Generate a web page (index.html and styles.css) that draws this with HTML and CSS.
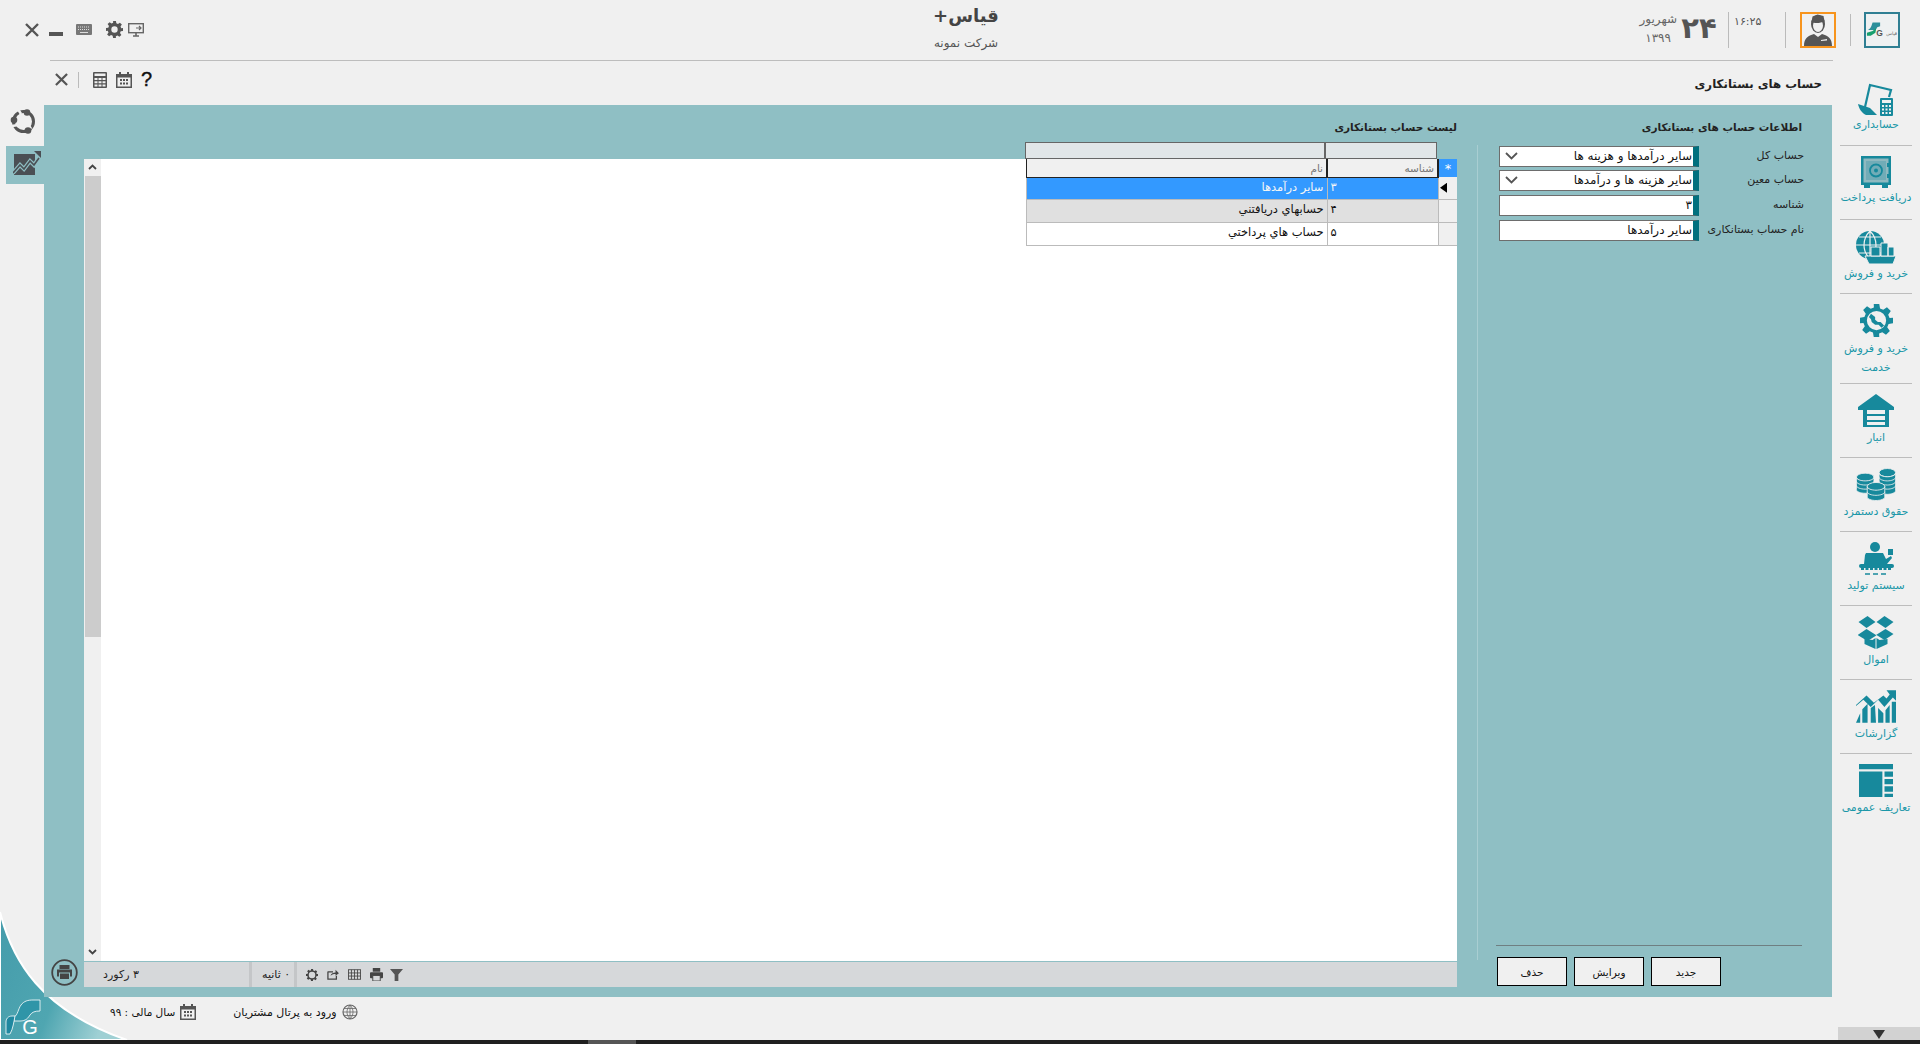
FILE: index.html
```html
<!DOCTYPE html>
<html lang="fa">
<head>
<meta charset="utf-8">
<title>حساب های بستانکاری</title>
<link rel="stylesheet" href="styles.css">
</head>
<body>
<div class="app">
  <svg class="swoosh" width="130" height="132" viewBox="0 908 130 132">
    <defs><linearGradient id="sw" x1="0" y1="0" x2="1" y2="0.4"><stop offset="0" stop-color="#459cab"/><stop offset="0.6" stop-color="#4fa6b1"/><stop offset="1" stop-color="#9fd0d4"/></linearGradient></defs>
    <path d="M0 912C12 960 40 1010 127 1040L0 1040Z" fill="url(#sw)" stroke="#fff" stroke-width="2"/>
  </svg>

  <header class="topbar">
    <div class="win-tools">
      <svg class="ico x-ico" width="14" height="14" viewBox="0 0 14 14"><path d="M1 1L13 13M13 1L1 13" stroke="#555" stroke-width="2.400" fill="none"/></svg>
      <span class="minimize"></span>
      <svg class="ico keyboard" width="16" height="11" viewBox="0 0 16 11"><rect width="16" height="11" rx="1" fill="#777"/><path d="M2 3h12M2 5.500h12" stroke="#ddd" stroke-width="1" stroke-dasharray="1 1"/><path d="M4 8.500h8" stroke="#ddd"/></svg>
      <svg class="ico gear-ico" width="17" height="17" viewBox="0 0 24 24"><path fill="#555" fill-rule="evenodd" d="M10 0h4l.6 3.200 2.300 1 2.700-1.900 2.800 2.800-1.900 2.700 1 2.300L24 10v4l-3.200.6-1 2.300 1.900 2.700-2.800 2.800-2.700-1.900-2.300 1L14 24h-4l-.6-3.200-2.300-1-2.700 1.900-2.800-2.800 1.900-2.700-1-2.300L0 14v-4l3.200-.6 1-2.300-1.900-2.700 2.800-2.800 2.700 1.900 2.300-1zM12 7.500a4.500 4.500 0 1 0 0 9 4.500 4.500 0 0 0 0-9z"/></svg>
      <svg class="ico" width="16" height="14" viewBox="0 0 16 14"><rect x="0.700" y="0.700" width="14.600" height="9" fill="none" stroke="#666" stroke-width="1.400"/><path d="M5 13h6M8 10v3" stroke="#666" stroke-width="1.600"/><path d="M8 5h5M11 3l2 2-2 2" stroke="#666" fill="none" stroke-width="1.200"/></svg>
    </div>
    <div class="brand" dir="rtl">
      <div class="brand-name">قیاس+</div>
      <div class="brand-sub">شرکت نمونه</div>
    </div>
    <div class="top-info">
      <div class="date-text" dir="rtl"><div class="month">شهریور</div><div class="year">۱۳۹۹</div></div>
      <div class="day">۲۴</div>
      <div class="time">۱۶:۲۵</div>
      <div class="avatar">
        <svg width="30" height="32" viewBox="0 0 30 32"><ellipse cx="15" cy="10" rx="7" ry="9" fill="#555"/><ellipse cx="15" cy="11.500" rx="5" ry="6.500" fill="#f0f0f0"/><path d="M8.500 8c3 1.500 9 1.500 13-1l-1-5-6-1.500-5 2z" fill="#555"/><path d="M1 32c0-8 4-10 10-12l4 3 4-3c6 2 10 4 10 12z" fill="#555"/><path d="M18 26l6-1v1.500l-6 .5z" fill="#f0f0f0"/></svg>
      </div>
      <span class="v-sep"></span>
      <div class="co-logo">
        <svg width="32" height="32" viewBox="0 0 34 34"><path d="M7 9h8v4l-3 1-2 3H2c3-1 4-5 5-8z" fill="#2b8f9b"/><path d="M1 20l6-2 4-3-1 5-5 3H1z" fill="#17a06e"/><text x="11" y="23" class="co-g">G</text><text x="33" y="22" class="co-t">قیاس</text></svg>
      </div>
    </div>
  </header>

  <div class="workspace">
    <aside class="left-rail">
      <div class="rail-item rail-sync">
        <svg width="27" height="25" viewBox="0 0 27 25"><circle cx="13.500" cy="12.500" r="10" fill="none" stroke="#555" stroke-width="3"/><path d="M8 0l3 5M2 17l6-1M21 20l-3-5" stroke="#f0f0f0" stroke-width="2.500"/><circle cx="17" cy="3.500" r="3.300" fill="#555"/><circle cx="4" cy="11" r="3.300" fill="#555"/><circle cx="18" cy="21.500" r="3.300" fill="#555"/></svg>
      </div>
      <div class="rail-item active">
        <svg width="28" height="24" viewBox="0 0 28 24"><rect x="1" y="3" width="21" height="21" fill="#4a4f54"/><path d="M0 22l7-8 4 4 6-8 4 4 6-9" fill="none" stroke="#8fbfc4" stroke-width="4"/><path d="M0 22l7-8 4 4 6-8 4 4 5-7" fill="none" stroke="#4a4f54" stroke-width="1.600"/><path d="M21 0h7v7z" fill="#4a4f54"/></svg>
      </div>
    </aside>

    <main class="content">
      <div class="subhead">
        <div class="form-tools">
          <svg width="13" height="13" viewBox="0 0 14 14"><path d="M1 1L13 13M13 1L1 13" stroke="#555" stroke-width="2.400" fill="none"/></svg>
          <span class="tool-sep"></span>
          <svg width="14" height="16" viewBox="0 0 14 16"><rect width="14" height="16" rx="1" fill="#555"/><rect x="1.500" y="1.500" width="11" height="2.500" fill="#f0f0f0"/><path d="M1.500 6h3v2h-3zM5.500 6h3v2h-3zM9.500 6h3v2h-3zM1.500 9.200h3v2h-3zM5.500 9.200h3v2h-3zM9.500 9.200h3v2h-3zM1.500 12.400h3v2h-3zM5.500 12.400h3v2h-3zM9.500 12.400h3v2h-3z" fill="#f0f0f0"/></svg>
          <svg width="16" height="16" viewBox="0 0 16 16"><rect y="2" width="16" height="14" fill="#555"/><rect x="1.500" y="5.500" width="13" height="9" fill="#f0f0f0"/><path d="M3 0h2v3.500H3zM11 0h2v3.500h-2z" fill="#555"/><path d="M4 7h2v2H4zM7 7h2v2H7zM10 7h2v2h-2zM4 10.500h2v2H4zM7 10.500h2v2H7zM10 10.500h2v2h-2z" fill="#555"/></svg>
          <span class="help">?</span>
        </div>
        <h1 class="page-title" dir="rtl">حساب های بستانکاری</h1>
      </div>

      <div class="panel">
        <section class="list-col">
          <h2 class="section-title" dir="rtl">لیست حساب بستانکاری</h2>
          <div class="bands">
            <span class="band band-name"></span><span class="band band-id"></span>
          </div>
          <div class="grid-body">
            <div class="scrollbar">
              <svg width="9" height="6" viewBox="0 0 9 6"><path d="M1 5l3.500-3.500L8 5" fill="none" stroke="#444" stroke-width="1.800"/></svg>
              <span class="thumb"></span>
              <svg class="scroll-down" width="9" height="6" viewBox="0 0 9 6"><path d="M1 1l3.500 3.500L8 1" fill="none" stroke="#444" stroke-width="1.800"/></svg>
            </div>
            <div class="canvas"></div>
            <table class="data" dir="rtl">
              <colgroup><col class="c-mark"><col class="c-id"><col class="c-name"></colgroup>
              <thead><tr><th class="star">*</th><th>شناسه</th><th class="th-name">نام</th></tr></thead>
              <tbody>
                <tr class="sel"><td class="mark"><span class="arrow"></span></td><td class="id">۳</td><td>سایر درآمدها</td></tr>
                <tr class="alt"><td class="mark"></td><td class="id">۴</td><td>حسابهاي دريافتني</td></tr>
                <tr><td class="mark"></td><td class="id">۵</td><td>حساب هاي پرداختي</td></tr>
              </tbody>
            </table>
          </div>
          <div class="grid-foot">
            <div class="print-btn">
              <svg width="27" height="27" viewBox="0 0 27 27"><circle cx="13.500" cy="13.500" r="12.300" fill="none" stroke="#444" stroke-width="1.800"/><rect x="8.500" y="6" width="10" height="4" fill="#444"/><rect x="6" y="10.500" width="15" height="7" fill="#444"/><rect x="8.500" y="14" width="10" height="6.500" fill="#444" stroke="#8fbfc4"/></svg>
            </div>
            <div class="statusbar-grid">
              <span class="records" dir="rtl">۳ رکورد</span>
              <span class="timer" dir="rtl">۰ ثانیه</span>
              <div class="grid-tools">
                <svg width="12" height="12" viewBox="0 0 24 24"><path fill="#444" fill-rule="evenodd" d="M10 0h4l.6 3.200 2.300 1 2.700-1.900 2.800 2.800-1.900 2.700 1 2.300L24 10v4l-3.200.6-1 2.300 1.900 2.700-2.800 2.800-2.700-1.900-2.300 1L14 24h-4l-.6-3.200-2.300-1-2.700 1.900-2.800-2.800 1.900-2.700-1-2.300L0 14v-4l3.200-.6 1-2.300-1.900-2.700 2.800-2.800 2.700 1.900 2.300-1zM12 5.500a6.500 6.500 0 1 0 0 13 6.500 6.500 0 0 0 0-13z"/></svg>
                <svg width="12" height="11" viewBox="0 0 14 13"><path d="M1 3.500h6M1 3v9h10V8" fill="none" stroke="#444" stroke-width="1.500"/><path d="M4 8c1-3 3-4 6-4V1l4 4-4 3V6C8 6 6 6.500 4 8z" fill="#444"/></svg>
                <svg width="13" height="11" viewBox="0 0 15 12"><rect x=".5" y=".5" width="14" height="11" fill="none" stroke="#444"/><path d="M.5 4.200h14M.5 7.800h14M4 .5v11M7.500 .5v11M11 .5v11" stroke="#444"/></svg>
                <svg width="13" height="13" viewBox="0 0 14 14"><rect x="3" y="0" width="8" height="4" fill="#444"/><rect y="4.500" width="14" height="6.500" rx="1" fill="#444"/><rect x="3" y="8" width="8" height="6" fill="#d6d8da" stroke="#444"/></svg>
                <svg class="filter-ico" width="13" height="13" viewBox="0 0 14 14"><path d="M0 1h14L9 7v7H5V7z" fill="#555"/></svg>
              </div>
            </div>
          </div>
        </section>
        <span class="col-rule"></span>
        <section class="form-col">
          <h2 class="section-title form-title" dir="rtl">اطلاعات حساب های بستانکاری</h2>
          <div class="fields" dir="rtl">
            <label class="f-label">حساب کل</label>
            <div class="f-box"><span class="f-text">سایر درآمدها و هزینه ها</span><svg class="chev" width="13" height="8" viewBox="0 0 13 8"><path d="M1 1l5.500 5.500L12 1" fill="none" stroke="#555" stroke-width="1.800"/></svg></div>
            <label class="f-label">حساب معین</label>
            <div class="f-box"><span class="f-text">سایر هزینه ها و درآمدها</span><svg class="chev" width="13" height="8" viewBox="0 0 13 8"><path d="M1 1l5.500 5.500L12 1" fill="none" stroke="#555" stroke-width="1.800"/></svg></div>
            <label class="f-label">شناسه</label>
            <div class="f-box"><span class="f-text">۳</span></div>
            <label class="f-label">نام حساب بستانکاری</label>
            <div class="f-box"><span class="f-text">سایر درآمدها</span></div>
          </div>
          <div class="actions">
            <div class="action-btns">
              <button class="btn">حذف</button>
              <button class="btn">ویرایش</button>
              <button class="btn">جدید</button>
            </div>
          </div>
        </section>
      </div>
    </main>

    <nav class="nav">
      <a class="nav-item first">
        <svg width="36" height="33" viewBox="0 0 36 33"><path d="M7 24L12 2l21 5-2 7" fill="none" stroke="#17899c" stroke-width="2.200"/><path d="M0 21l12 4 7 7H8c-4-2-7-6-8-11z" fill="#17899c"/><rect x="22" y="15" width="13" height="18" rx="1" fill="#17899c"/><rect x="24" y="17" width="9" height="3" fill="#f0f0f0"/><path d="M24 22h2v2h-2zM27.500 22h2v2h-2zM31 22h2v2h-2zM24 25.500h2v2h-2zM27.500 25.500h2v2h-2zM31 25.500h2v2h-2zM24 29h2v2h-2zM27.500 29h2v2h-2zM31 29h2v2h-2z" fill="#f0f0f0"/></svg>
        <span dir="rtl">حسابداری</span>
      </a>
      <a class="nav-item">
        <svg width="30" height="33" viewBox="0 0 30 33"><rect width="30" height="29" fill="#17899c"/><rect x="2.500" y="2.500" width="25" height="24" fill="#8fb9c0"/><rect x="5" y="5" width="20" height="19" fill="#17899c" opacity=".25"/><circle cx="15" cy="14.500" r="6" fill="none" stroke="#17899c" stroke-width="1.800"/><circle cx="15" cy="14.500" r="2" fill="#17899c"/><path d="M26 7h3v4h-3zM26 18h3v4h-3z" fill="#17899c"/><path d="M3 29h6v3H3zM21 29h6v3h-6z" fill="#17899c"/></svg>
        <span dir="rtl">دریافت پرداخت</span>
      </a>
      <a class="nav-item">
        <svg width="42" height="35" viewBox="0 0 42 35"><circle cx="15" cy="15" r="14" fill="#17899c"/><path d="M15 1v28M1 15h28M4 7h22M4 23h22M15 1c-8 8-8 20 0 28M15 1c8 8 8 20 0 28" fill="none" stroke="#f0f0f0" stroke-width="1.200"/><path d="M10 26h31l-3 8H14z" fill="#17899c" stroke="#f0f0f0"/><path d="M16 17h9v9h-9zM26 13h7v13h-7zM33 17h6v9h-6z" fill="#17899c" stroke="#f0f0f0"/></svg>
        <span dir="rtl">خرید و فروش</span>
      </a>
      <a class="nav-item double">
        <svg width="33" height="33" viewBox="0 0 24 24"><path fill="#17899c" fill-rule="evenodd" d="M10 0h4l.6 3.200 2.300 1 2.700-1.900 2.800 2.800-1.900 2.700 1 2.300L24 10v4l-3.200.6-1 2.300 1.900 2.700-2.800 2.800-2.700-1.900-2.300 1L14 24h-4l-.6-3.200-2.300-1-2.700 1.900-2.800-2.800 1.900-2.700-1-2.300L0 14v-4l3.200-.6 1-2.300-1.900-2.700 2.800-2.800 2.700 1.900 2.300-1zM12 5a7 7 0 1 0 0 14 7 7 0 0 0 0-14z"/><path fill="#17899c" d="M8 7l3 2.500v2l2 1.500h2l2.500 2.700-1.800 1.500L13.500 15H11L8.500 13l-.5-2L6.500 9.500z"/></svg>
        <span dir="rtl">خرید و فروش خدمت</span>
      </a>
      <a class="nav-item short">
        <svg width="36" height="33" viewBox="0 0 36 33"><path d="M18 0L36 13v3H31v17H5V16H0v-3z" fill="#17899c"/><path d="M9 16h18v4H9zM9 22h18v4H9zM9 28h18v3H9z" fill="#f0f0f0"/></svg>
        <span dir="rtl">انبار</span>
      </a>
      <a class="nav-item short">
        <svg width="40" height="33" viewBox="0 0 38 32"><g fill="#17899c" stroke="#f0f0f0" stroke-width=".8"><ellipse cx="30" cy="4.500" rx="8" ry="4"/><path d="M22 5v17c0 2 4 3.500 8 3.500s8-1.500 8-3.500V5c0 2-4 3.500-8 3.500S22 7 22 5z"/><path d="M22 9c0 2 4 3.500 8 3.500s8-1.500 8-3.500M22 13c0 2 4 3.500 8 3.500s8-1.500 8-3.500M22 17c0 2 4 3.500 8 3.500s8-1.500 8-3.500" fill="none"/><ellipse cx="8.500" cy="9" rx="8.500" ry="4"/><path d="M0 9v12c0 2 4 3.500 8.500 3.500S17 23 17 21V9c0 2-4 3.500-8.500 3.500S0 11 0 9z"/><path d="M0 13c0 2 4 3.500 8.500 3.500S17 15 17 13M0 17c0 2 4 3.500 8.500 3.500S17 19 17 17" fill="none"/><ellipse cx="19" cy="18" rx="8.500" ry="4"/><path d="M10.500 18v10c0 2 4 3.500 8.500 3.500s8.500-1.500 8.500-3.500V18c0 2-4 3.500-8.500 3.500s-8.500-1.500-8.500-3.500z"/><path d="M10.500 23c0 2 4 3.500 8.500 3.500s8.500-1.500 8.500-3.500" fill="none"/></g></svg>
        <span dir="rtl">حقوق دستمزد</span>
      </a>
      <a class="nav-item short">
        <svg width="37" height="33" viewBox="0 0 37 33"><circle cx="17" cy="5" r="5" fill="#17899c"/><path d="M8 11h17l3 6 5-3 1 2-5 6H6l1-9z" fill="#17899c"/><path d="M30 7h5v6h-5z" fill="#17899c"/><rect x="1" y="22" width="35" height="4" rx="2" fill="#17899c"/><path d="M3 27h31" stroke="#17899c" stroke-width="2" stroke-dasharray="3 1.500"/><path d="M7 32h5M15 32h5M23 32h5" stroke="#17899c" stroke-width="1.500"/></svg>
        <span dir="rtl">سیستم تولید</span>
      </a>
      <a class="nav-item short">
        <svg width="36" height="33" viewBox="0 0 35 33"><path d="M9 0l8 6-9 6-8-6zM26 0l9 6-8 6-9-6zM8 13l9.500 6 9.500-6 8 5-9 6-8-5-1 1-8 5-10-6z" fill="#17899c"/><path d="M6 23v5l11 5V22l-3 2zM29 23v5l-11 5V22l3 2z" fill="#17899c"/></svg>
        <span dir="rtl">اموال</span>
      </a>
      <a class="nav-item short">
        <svg width="40" height="33" viewBox="0 0 38 31"><path d="M0 14l10-9 7 7 9-7 3 3 3-4-3-4h9v10l-3-3-8 9-6-7-7 7-7-7-7 6z" fill="#17899c"/><path d="M0 31l4-9v9zM6 31V18l5-5v18zM14 31V17l4-3 1 17zM21 31V17l5 5v9zM28 31V19l4-5v17zM34 31V11h4v20z" fill="#17899c"/></svg>
        <span dir="rtl">گزارشات</span>
      </a>
      <a class="nav-item short last">
        <svg width="34" height="33" viewBox="0 0 32 31"><path d="M0 0h32v5H0zM0 7h22v24H0zM24 7h8v5h-8zM24 14h8v5h-8zM24 21h8v5h-8zM24 28h8v3h-8z" fill="#17899c"/></svg>
        <span dir="rtl">تعاریف عمومی</span>
      </a>
    </nav>
  </div>

  <footer class="statusbar">
    <svg class="g-logo" width="36" height="41" viewBox="0 0 36 41"><path d="M9 18C13 16 13 10 16 6 19 2 23 1 28 1h7v11c-5 0-8 1-10 4-2 3-4 6-10 6H9z" fill="#2f95a8" stroke="#fff" stroke-width=".8"/><path d="M1 23c0-3 2-6 6-6h3c-1 5-2 13-5 18H1z" fill="#1f88a0" stroke="#fff" stroke-width=".8"/><text x="25" y="35" class="g-letter">G</text></svg>
    <div class="status-item fiscal" dir="ltr">
      <span dir="rtl">سال مالی : ۹۹</span>
      <svg width="16" height="16" viewBox="0 0 16 16"><rect y="2" width="16" height="14" fill="#555"/><rect x="1.500" y="5.500" width="13" height="9" fill="#f0f0f0"/><path d="M3 0h2v3.500H3zM11 0h2v3.500h-2z" fill="#555"/><path d="M4 7h2v2H4zM7 7h2v2H7zM10 7h2v2h-2zM4 10.500h2v2H4zM7 10.500h2v2H7zM10 10.500h2v2h-2z" fill="#555"/></svg>
    </div>
    <div class="status-item">
      <span dir="rtl">ورود به پرتال مشتریان</span>
      <svg width="16" height="16" viewBox="0 0 16 16"><circle cx="8" cy="8" r="7" fill="none" stroke="#666" stroke-width="1.200"/><path d="M8 1v14M1 8h14M2 4.500h12M2 11.500h12M8 1c-4 4-4 10 0 14M8 1c4 4 4 10 0 14" fill="none" stroke="#666" stroke-width=".8"/></svg>
    </div>
    <div class="more"><span class="more-tri"></span></div>
  </footer>
  <div class="taskbar"><span class="task-item"></span></div>
</div>
</body>
</html>
```
FILE: styles.css
```css
* { box-sizing: border-box; }
html, body { margin: 0; height: 100%; }
body { background: #f0f0f0; font-family: "DejaVu Sans", "Liberation Sans", sans-serif; font-size: 10px; color: #111; overflow: hidden; }
.app { position: relative; width: 1920px; height: 1044px; display: flex; flex-direction: column; overflow: hidden; }
.swoosh { position: absolute; left: 0; bottom: 4px; }

/* top bar */
.topbar { position: relative; height: 61px; margin: 0 87px 0 0; padding-left: 25px; display: grid; grid-template-columns: 1fr auto 1fr; flex: none; }
.topbar::after { content: ""; position: absolute; left: 50px; right: 0; top: 60px; height: 1px; background: #bdbdbd; }
.win-tools { display: flex; align-items: center; height: 59px; }
.win-tools .ico { flex: none; }
.minimize { width: 14px; height: 4px; background: #555; margin: 9px 13px 0 10px; }
.keyboard { margin-right: 14px; }
.gear-ico { margin-right: 5px; }
.brand { text-align: center; padding-left: 10px; margin-right: -64px; }
.brand-name { font-size: 18px; font-weight: 700; color: #444; line-height: 22px; margin-top: 5px; }
.brand-sub { font-size: 12px; color: #555; line-height: 14px; margin-top: 9px; }
.top-info { position: absolute; right: -87px; top: 0; display: flex; align-items: flex-start; }
.date-text { width: 42px; margin: 12px -4px 0 0; color: #666; text-align: right; }
.month { font-size: 12px; line-height: 15px; white-space: nowrap; }
.year { font-size: 12px; line-height: 15px; margin: 4px 6px 0 0; letter-spacing: 1px; }
.day { font-size: 29px; font-weight: 700; line-height: 36px; color: #555; margin: 10px 10px 0 7px; width: 38px; text-align: center; letter-spacing: 3px; }
.time { width: 58px; height: 36px; margin-top: 12px; padding: 3px 0 0 5px; font-size: 11px; color: #555; border-left: 1px solid #bbb; border-right: 1px solid #bbb; }
.avatar { width: 36px; height: 36px; margin: 12px 14px 0 14px; border: 2px solid #f7941d; background: #f0f0f0; display: flex; align-items: flex-end; justify-content: center; overflow: hidden; }
.v-sep { width: 1px; height: 32px; margin: 14px 13px 0 0; background: #bbb; }
.co-logo { width: 36px; height: 36px; margin: 12px 20px 0 0; border: 2px solid #2f7f93; background: #eef1f2; overflow: hidden; }
.co-g { font: 700 9px "Liberation Sans", sans-serif; fill: #555; }
.co-t { font-size: 5px; fill: #666; text-anchor: end; }

/* workspace */
.workspace { position: relative; flex: 1; display: flex; min-height: 0; }
.left-rail { width: 44px; flex: none; padding-top: 44px; display: flex; flex-direction: column; align-items: flex-end; }
.rail-item { width: 38px; height: 38px; display: flex; align-items: center; justify-content: center; }
.rail-sync { width: 44px; height: 32px; margin-bottom: 9px; padding-left: 2px; }
.rail-item.active { background: #8fbfc4; padding: 0 0 4px 3px; }
.content { flex: none; width: 1788px; display: flex; flex-direction: column; }
.subhead { height: 44px; flex: none; display: flex; align-items: center; justify-content: space-between; padding: 0 10px 0 11px; }
.form-tools { display: flex; align-items: center; gap: 9px; margin-bottom: 7px; }
.tool-sep { width: 1px; height: 16px; background: #bbb; margin: 0 5px 0 1px; }
.help { font: 400 20px "Liberation Sans", sans-serif; color: #111; -webkit-text-stroke: .4px #111; }
.page-title { margin: 1px 0 0; font-size: 11.800px; font-weight: 700; color: #222; }

.panel { flex: 1; display: flex; background: #8fbfc4; min-height: 0; }
.list-col { flex: 1; min-width: 0; padding-left: 40px; padding-right: 20px; display: flex; flex-direction: column; }
.section-title { margin: 0; font-size: 10.500px; font-weight: 700; color: #222; }
.list-col .section-title { height: 37px; padding-top: 16px; }
.bands { height: 17px; display: flex; justify-content: flex-end; margin-right: 20px; }
.band { height: 17px; background: #e1e6e8; border: 1px solid #666; }
.band-name { width: 301px; border-right-width: 2px; }
.band-id { width: 111px; border-left: 0; }
.grid-body { position: relative; height: 802px; flex: none; display: flex; background: #fff; }
.scrollbar { width: 17px; flex: none; background: #f0f0f0; display: flex; flex-direction: column; align-items: center; padding-top: 5px; }
.thumb { width: 16px; height: 461px; margin-top: 6px; background: #ccc; }
.scroll-down { margin-top: auto; margin-bottom: 6px; }
.canvas { flex: 1; }
.data { width: 431px; flex: none; table-layout: fixed; border-collapse: collapse; align-self: flex-start; font-size: 11.500px; }
.c-mark { width: 19px; } .c-id { width: 111px; } .c-name { width: 301px; }
.data th { height: 18px; padding: 0 3px; font-weight: 400; font-size: 10.500px; text-align: right; color: #777; background: #f0f0f0; border-right: 2px solid #222; border-bottom: 1px solid #222; vertical-align: middle; }
.data th.star { background: #3399ff; color: #fff; border: 0; text-align: center; font-size: 13px; }
.data th.th-name { border-left: 1px solid #222; }
.data td { height: 23px; padding: 0 3px 3px; text-align: right; color: #111; background: #fff; border-bottom: 1px solid #bbb; border-right: 1px solid #bbb; }
.data td.id { text-align: left; }
.data td.mark { background: #f0f0f0; border-right: 0; padding: 0 1px; }
.data tr.sel td { height: 22px; background: #3399ff; color: #f5f5f5; }
.data tr.sel td.mark { background: #f0f0f0; }
.data tr.alt td { background: #e0e0e0; }
.data tr.alt td.mark { background: #f0f0f0; }
.data td:last-child { border-left: 1px solid #bbb; }
.arrow { display: block; width: 7px; height: 10px; margin-right: 9px; background: #000; clip-path: polygon(0 50%, 100% 0, 100% 100%); }

.grid-foot { display: flex; height: 26px; flex: none; margin-left: -40px; }
.print-btn { width: 40px; flex: none; padding-left: 7px; margin-top: -2px; }
.statusbar-grid { flex: 1; display: flex; align-items: center; background: #d6d8da; border-top: 1px solid #8fbfc4; padding-left: 19px; }
.records { width: 146px; font-size: 11px; color: #222; text-align: left; }
.timer { width: 48px; height: 25px; line-height: 25px; border-left: 3px solid #c4c6c8; border-right: 3px solid #c4c6c8; font-size: 11px; color: #222; text-align: left; padding-left: 10px; white-space: nowrap; }
.grid-tools { display: flex; align-items: center; gap: 9px; margin-left: 9px; }
.filter-ico { margin-left: -2px; }
.col-rule { width: 1px; flex: none; background: #a9ced2; margin: 40px 0 37px; }
.form-col { width: 354px; flex: none; padding: 0 28px 11px 18px; display: flex; flex-direction: column; }
.form-title { height: 41px; padding-top: 16px; padding-right: 2px; }
.fields { display: grid; grid-template-columns: 105px 200px; grid-template-rows: 24px 25px 25px 21px; justify-content: start; }
.f-label { font-size: 11px; line-height: 19px; color: #222; white-space: nowrap; }
.f-box { position: relative; height: 21px; width: 200px; background: #fff; border: 1px solid #6d6d6d; border-right: 6px solid #00707e; padding: 0 1px; line-height: 18px; font-size: 12px; color: #111; }
.chev { position: absolute; left: 5px; top: 5px; }
.actions { margin-top: auto; margin-right: 2px; border-top: 1px solid #6f7f82; padding: 11px 0 0 1px; }
.action-btns { display: flex; gap: 7px; }
.btn { width: 70px; height: 29px; padding: 0; background: #f0f0f0; border: 1px solid #000; font: 400 10.500px "DejaVu Sans", sans-serif; color: #111; outline: 0; }

/* nav */
.nav { width: 88px; flex: none; padding: 0 8px; display: flex; flex-direction: column; }
.nav-item { height: 74px; flex: none; display: flex; flex-direction: column; align-items: center; padding-top: 10px; border-bottom: 1px solid #bdbdbd; color: #1a97a8; font-size: 11px; text-align: center; }
.nav-item svg { flex: none; }
.nav-item span { line-height: 18px; white-space: nowrap; }
.nav-item.first { height: 85px; padding-top: 22px; }
.nav-item.double { height: 90px; }
.nav-item.double span { width: 72px; white-space: normal; line-height: 19px; margin-top: 2px; }
.nav-item.short span { margin-top: 2px; }
.nav-item.last { border-bottom: 0; }

/* status */
.statusbar { position: relative; height: 43px; flex: none; display: flex; align-items: flex-start; padding: 7px 0 0 110px; gap: 37px; font-size: 11px; color: #111; }
.g-logo { position: absolute; left: 5px; top: 2px; }
.g-letter { font: 400 20px "Liberation Sans", sans-serif; fill: #fff; text-anchor: middle; }
.status-item { display: flex; align-items: center; gap: 5px; }
.fiscal { font-size: 10.500px; }
.more { position: absolute; right: 0; bottom: 0; width: 82px; height: 13px; background: #d2d2d2; display: flex; justify-content: center; }
.more-tri { width: 12px; height: 9px; margin-top: 3px; background: #333; clip-path: polygon(0 0, 100% 0, 50% 100%); }
.taskbar { height: 4px; flex: none; background: #1f1f1f; padding-left: 588px; }
.task-item { display: block; width: 48px; height: 4px; background: #555; }
```
